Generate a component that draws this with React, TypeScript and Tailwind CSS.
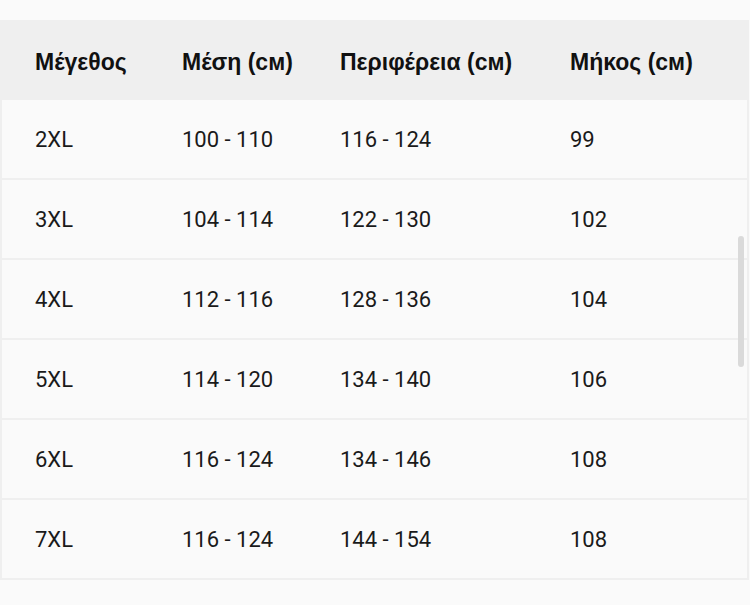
const rows = [
  ['2XL', '100 - 110', '116 - 124', '99'],
  ['3XL', '104 - 114', '122 - 130', '102'],
  ['4XL', '112 - 116', '128 - 136', '104'],
  ['5XL', '114 - 120', '134 - 140', '106'],
  ['6XL', '116 - 124', '134 - 146', '108'],
  ['7XL', '116 - 124', '144 - 154', '108'],
]

const headers = ['Μέγεθος', 'Μέση (cм)', 'Περιφέρεια (cм)', 'Μήκος (cм)']

const cols = 'grid grid-cols-[147px_158px_230px_1fr]'

export default function App() {
  return (
    <div className="relative w-[750px] h-[605px] overflow-hidden bg-[#fafafa] pt-5" style={{ fontFamily: 'Roboto, sans-serif' }}>
      <div className="w-[749px] border-x-2 border-[#efefef]">
        <div className={`${cols} h-20 items-center bg-[#efefef] pt-1 text-[23px] font-bold text-[#111]`} style={{ fontFamily: '"Liberation Sans", Arial, sans-serif' }}>
          {headers.map((h, i) => (
            <div key={i} className="pl-[33px]">{h}</div>
          ))}
        </div>
        {rows.map((row, r) => (
          <div key={r} className={`${cols} h-20 items-center border-b-2 border-[#efefef] text-[22px] text-[#1a1a1a]`}>
            {row.map((c, i) => (
              <div key={i} className="pl-[33px]">{c}</div>
            ))}
          </div>
        ))}
      </div>
      <div className="absolute left-[738px] top-[236px] h-[131px] w-[6px] rounded-full bg-[#dadada]" />
    </div>
  )
}
